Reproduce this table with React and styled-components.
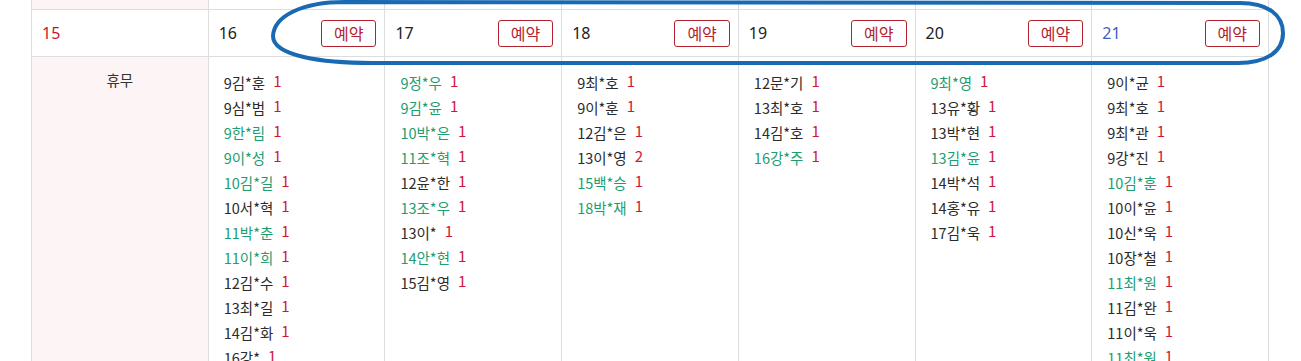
import styled, { createGlobalStyle } from "styled-components";

const GlobalStyle = createGlobalStyle`
  html, body {
    margin: 0;
    padding: 0;
    background: #fff;
  }
  body {
    font-family: "Noto Sans CJK KR", "Noto Sans", sans-serif;
    color: #333;
    overflow: hidden;
  }
`;

const Page = styled.div`
  position: relative;
  width: 1301px;
  height: 361px;
  overflow: hidden;
`;

const Table = styled.div`
  margin-left: 31px;
  width: 1237px;
  border-left: 1px solid #ddd;
`;

const Row = styled.div`
  display: grid;
  grid-template-columns: repeat(7, 1fr);
`;

const TailCell = styled.div`
  height: 9px;
  border-right: 1px solid #ddd;
  border-bottom: 1px solid #ddd;
  background: ${(p) => (p.$holiday ? "#fdf4f5" : "#fff")};
`;

const HeadCell = styled.div`
  height: 46px;
  display: flex;
  align-items: center;
  justify-content: space-between;
  padding: 0 8px 0 10px;
  border-right: 1px solid #ddd;
  border-bottom: 1px solid #ddd;
  background: #fff;
`;

const DateNum = styled.span`
  font-family: "Noto Sans", "Noto Sans CJK KR", sans-serif;
  font-size: 16px;
  color: ${(p) => p.$color || "#222"};
`;

const ReserveButton = styled.button`
  height: 27px;
  padding: 0 12px;
  border: 1px solid #b5222f;
  border-radius: 3px;
  background: #fff;
  color: #b5222f;
  font-family: "Noto Sans CJK KR", sans-serif;
  font-size: 16px;
  line-height: 25px;
`;

const BodyCell = styled.div`
  min-height: 320px;
  padding: 13px 0 0 15px;
  border-right: 1px solid #ddd;
  background: ${(p) => (p.$holiday ? "#fdf4f5" : "#fff")};
`;

const OffText = styled.div`
  margin-top: -3px;
  margin-left: -15px;
  text-align: center;
  font-size: 14.5px;
  line-height: 25px;
  color: #333;
`;

const Entry = styled.div`
  height: 25px;
  font-size: 14.5px;
  line-height: 25px;
  white-space: nowrap;
  color: ${(p) => (p.$member ? "#1c9d72" : "#2b2b2b")};
`;

const Count = styled.span`
  margin-left: 8px;
  color: #d0173a;
  font-size: 15px;
  line-height: 0;
  vertical-align: 2px;
`;

const Ring = styled.svg`
  position: absolute;
  left: 0;
  top: 0;
  pointer-events: none;
`;

const days = [
  { d: 15, color: "#c8162b", holiday: true, reserve: false, list: [] },
  {
    d: 16,
    reserve: true,
    list: [
      ["9김*훈", 1], ["9심*범", 1], ["9한*림", 1, true], ["9이*성", 1, true],
      ["10김*길", 1, true], ["10서*혁", 1], ["11박*춘", 1, true], ["11이*희", 1, true],
      ["12김*수", 1], ["13최*길", 1], ["14김*화", 1], ["16강*", 1],
    ],
  },
  {
    d: 17,
    reserve: true,
    list: [
      ["9정*우", 1, true], ["9김*윤", 1, true], ["10박*은", 1, true], ["11조*혁", 1, true],
      ["12윤*한", 1], ["13조*우", 1, true], ["13이*", 1], ["14안*현", 1, true], ["15김*영", 1],
    ],
  },
  {
    d: 18,
    reserve: true,
    list: [
      ["9최*호", 1], ["9이*훈", 1], ["12김*은", 1], ["13이*영", 2],
      ["15백*승", 1, true], ["18박*재", 1, true],
    ],
  },
  {
    d: 19,
    reserve: true,
    list: [["12문*기", 1], ["13최*호", 1], ["14김*호", 1], ["16강*주", 1, true]],
  },
  {
    d: 20,
    reserve: true,
    list: [
      ["9최*영", 1, true], ["13유*황", 1], ["13박*현", 1], ["13김*윤", 1, true],
      ["14박*석", 1], ["14홍*유", 1], ["17김*욱", 1],
    ],
  },
  {
    d: 21,
    color: "#3a5fc6",
    reserve: true,
    list: [
      ["9이*균", 1], ["9최*호", 1], ["9최*관", 1], ["9강*진", 1],
      ["10김*훈", 1, true], ["10이*윤", 1], ["10신*욱", 1], ["10장*철", 1],
      ["11최*원", 1, true], ["11김*완", 1], ["11이*욱", 1], ["11최*원", 1, true],
    ],
  },
];

export default function App() {
  return (
    <>
      <GlobalStyle />
      <Page>
        <Table>
          <Row>
            {days.map((day) => (
              <TailCell key={day.d} $holiday={day.holiday} />
            ))}
          </Row>
          <Row>
            {days.map((day) => (
              <HeadCell key={day.d}>
                <DateNum $color={day.color}>{day.d}</DateNum>
                {day.reserve && <ReserveButton>예약</ReserveButton>}
              </HeadCell>
            ))}
          </Row>
          <Row>
            {days.map((day) => (
              <BodyCell key={day.d} $holiday={day.holiday}>
                {day.holiday && <OffText>휴무</OffText>}
                {day.list.map(([name, n, member], i) => (
                  <Entry key={i} $member={member}>
                    {name}
                    <Count>{n}</Count>
                  </Entry>
                ))}
              </BodyCell>
            ))}
          </Row>
        </Table>
        <Ring width="1301" height="80" viewBox="0 0 1301 80">
          <path
            d="M 345 2 L 1240 3 C 1268 3 1283 15 1283 33 C 1283 52 1266 63 1238 63 L 372 63 C 322 63 273 56 273 36 C 274 16 302 2 345 2 Z"
            fill="none"
            stroke="#1a69b3"
            strokeWidth="4"
          />
        </Ring>
      </Page>
    </>
  );
}
